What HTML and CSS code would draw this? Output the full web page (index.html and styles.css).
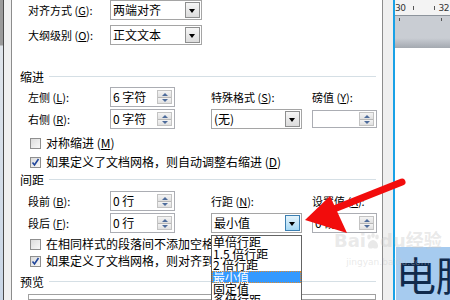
FILE: index.html
```html
<!DOCTYPE html>
<html lang="zh-CN">
<head>
    <meta charset="UTF-8">
    <title>段落</title>
    <link rel="stylesheet" href="styles.css">
</head>
<body>
<div class="screen">
    <div class="edge-left"></div>
    <div class="frame-left"></div>

    <div class="dialog">
        <div class="field-row first">
            <span class="label">对齐方式 (<u>G</u>):</span>
            <div class="select wide"><span class="value">两端对齐</span><span class="drop-btn"></span></div>
        </div>
        <div class="field-row">
            <span class="label">大纲级别 (<u>O</u>):</span>
            <div class="select wide"><span class="value">正文文本</span><span class="drop-btn"></span></div>
        </div>

        <div class="group-title indent-title"><span>缩进</span><i></i></div>
        <div class="field-grid">
            <span class="label">左侧 (<u>L</u>):</span>
            <div class="spin"><span class="value">6 字符</span><span class="spin-btns"><b class="up"></b><b class="down"></b></span></div>
            <span class="label col3">特殊格式 (<u>S</u>):</span>
            <span class="label col4">磅值 (<u>Y</u>):</span>

            <span class="label">右侧 (<u>R</u>):</span>
            <div class="spin"><span class="value">0 字符</span><span class="spin-btns"><b class="up"></b><b class="down"></b></span></div>
            <div class="select col3"><span class="value">(无)</span><span class="drop-btn"></span></div>
            <div class="spin col4 short"><span class="value"></span><span class="spin-btns"><b class="up"></b><b class="down"></b></span></div>
        </div>
        <div class="check-row cb-a"><span class="box"></span>对称缩进 (<u>M</u>)</div>
        <div class="check-row cb-b"><span class="box checked"></span>如果定义了文档网格，则自动调整右缩进 (<u>D</u>)</div>

        <div class="group-title spacing-title"><span>间距</span><i></i></div>
        <div class="field-grid">
            <span class="label">段前 (<u>B</u>):</span>
            <div class="spin"><span class="value">0 行</span><span class="spin-btns"><b class="up"></b><b class="down"></b></span></div>
            <span class="label col3">行距 (<u>N</u>):</span>
            <span class="label col4">设置值 (<u>A</u>):</span>

            <span class="label">段后 (<u>F</u>):</span>
            <div class="spin"><span class="value">0 行</span><span class="spin-btns"><b class="up"></b><b class="down"></b></span></div>
            <div class="select col3 open"><span class="value">最小值</span><span class="drop-btn hot"></span></div>
            <div class="spin col4"><span class="value">0 磅</span><span class="spin-btns"><b class="up"></b><b class="down"></b></span></div>
        </div>
        <div class="check-row cb-c"><span class="box"></span>在相同样式的段落间不添加空格 (<u>C</u>)</div>
        <div class="check-row cb-d"><span class="box checked"></span>如果定义了文档网格，则对齐到网格 (<u>W</u>)</div>

        <div class="group-title preview-title"><span>预览</span><i></i></div>
        <div class="preview"></div>
    </div>

    <div class="frame-right"></div>
    <div class="doc-border"></div>

    <div class="doc">
        <div class="ruler">
            <span class="num">30</span><span class="tick"></span><span class="tick"></span><span class="num">32</span>
        </div>
        <div class="ruler-marks"><span></span><span></span></div>
        <div class="doc-band"></div>
        <div class="doc-page"></div>
        <div class="doc-sel">电脑</div>
    </div>

    <ul class="drop-list">
        <li>单倍行距</li>
        <li>1.5 倍行距</li>
        <li>2 倍行距</li>
        <li class="current">最小值</li>
        <li>固定值</li>
        <li>多倍行距</li>
    </ul>

    <div class="watermark">
        <span class="wm-logo">Bai<svg width="14" height="16" viewBox="0 0 14 16"><ellipse cx="3" cy="4" rx="1.8" ry="2.4"/><ellipse cx="7" cy="2.5" rx="1.8" ry="2.4"/><ellipse cx="11" cy="4" rx="1.8" ry="2.4"/><path d="M7 7c-3 0-5.5 4-5 6.5s3 2.5 5 1.5c2 1 4.5 1 5-1.5S10 7 7 7z"/></svg>du经验</span>
        <span class="wm-url">jingyan.baidu.com</span>
    </div>

    <svg class="arrow" width="450" height="300" viewBox="0 0 450 300">
        <line x1="402" y1="182" x2="334" y2="209" stroke="#f20c0c" stroke-width="7" stroke-linecap="round"/>
        <polygon points="305,220 330,196 347,233" fill="#f20c0c"/>
    </svg>
</div>
</body>
</html>
```

FILE: styles.css
```css
body {
    margin: 0;
    padding: 0;
    background-color: #ffffff;
    font-family: "Noto Sans CJK SC", "DejaVu Sans", sans-serif;
    color: #000000;
}

.screen {
    position: relative;
    display: flex;
    width: 450px;
    height: 300px;
    overflow: hidden;
}

/* window frames on both sides of the dialog */
.edge-left {
    width: 3px;
    flex-shrink: 0;
    background: linear-gradient(#9a9a9a 0, #9a9a9a 45px, #dfe4ea 46px, #c9d6e6 100%);
}

.frame-left {
    width: 7px;
    flex-shrink: 0;
    background-color: #f0f0f0;
    border-left: 1px solid #4b4b4b;
    border-right: 1px solid #8c8c8c;
}

.frame-right {
    width: 10px;
    flex-shrink: 0;
    background-color: #efefef;
    border-left: 1px solid #8c8c8c;
}

.doc-border {
    width: 2px;
    flex-shrink: 0;
    background-color: #19a1e6;
}

.dialog {
    width: 370px;
    flex-shrink: 0;
    display: flex;
    flex-direction: column;
    background-color: #ffffff;
    padding-left: 8px;
    box-sizing: border-box;
}

.label {
    font-size: 11px;
    line-height: 20px;
    white-space: nowrap;
}

.label u, .check-row u {
    text-decoration: underline;
}

.field-row {
    display: flex;
    height: 20px;
    margin-top: 5px;
    padding-left: 8px;
}

.field-row.first {
    margin-top: 0;
}

.field-row .label {
    width: 82px;
}

.select {
    display: flex;
    align-items: center;
    height: 20px;
    border: 1px solid #a5a5a5;
    box-sizing: border-box;
    background-color: #fff;
}

.select.wide {
    width: 92px;
}

.select .value, .spin .value {
    flex: 1;
    font-size: 12px;
    line-height: 18px;
    padding-left: 2px;
    white-space: nowrap;
}

.drop-btn {
    position: relative;
    width: 15px;
    height: 16px;
    margin-right: 1px;
    border: 1px solid #8e8f8f;
    box-sizing: border-box;
    background: linear-gradient(#f6f6f6, #dcdcdc);
}

.drop-btn::after {
    content: "";
    position: absolute;
    left: 3px;
    top: 6px;
    border-left: 3.5px solid transparent;
    border-right: 3.5px solid transparent;
    border-top: 4px solid #000;
}

.drop-btn.hot {
    border-color: #3c7fb1;
    background: linear-gradient(#e5f4fc, #a7d9f5);
}

.group-title {
    display: flex;
    align-items: center;
    height: 18px;
    font-size: 12px;
    margin-right: 6px;
}

.group-title i {
    flex: 1;
    height: 1px;
    margin-left: 5px;
    background-color: #d5dfe5;
}

.indent-title { margin-top: 23px; }
.spacing-title { margin-top: 3px; }
.preview-title { margin-top: 6px; }

.field-grid {
    display: grid;
    grid-template-columns: 82px 65px 127px 75px;
    grid-template-rows: 20px 20px;
    row-gap: 2px;
    margin-top: 2px;
    padding-left: 8px;
}

.spacing-title + .field-grid {
    margin-top: 3px;
}

.field-grid .col3 {
    grid-column: 3;
    margin-left: 36px;
    width: 91px;
}

.field-grid .col4 {
    grid-column: 4;
    margin-left: 10px;
    width: 65px;
}

.spin {
    display: flex;
    align-items: center;
    height: 20px;
    width: 65px;
    border: 1px solid #abadb3;
    box-sizing: border-box;
    background-color: #fff;
}

.spin.short {
    height: 18px;
    margin-top: 1px;
}

.spin-btns {
    display: flex;
    flex-direction: column;
    width: 15px;
    height: 14px;
    margin-right: 2px;
    border: 1px solid #c3c3c3;
    box-sizing: border-box;
}

.spin-btns b {
    position: relative;
    flex: 1;
    background: linear-gradient(#f4f4f4, #e0e0e0);
}

.spin-btns b.down {
    border-top: 1px solid #b8b8b8;
}

.spin-btns b::after {
    content: "";
    position: absolute;
    left: 4px;
    top: 2px;
    border-left: 3px solid transparent;
    border-right: 3px solid transparent;
}

.spin-btns b.up::after {
    border-bottom: 3px solid #4e6c9b;
}

.spin-btns b.down::after {
    border-top: 3px solid #4e6c9b;
    top: 1px;
}

.check-row {
    display: flex;
    align-items: center;
    height: 12px;
    padding-left: 10px;
    font-size: 12px;
    line-height: 12px;
    white-space: nowrap;
}

.check-row .box {
    width: 11px;
    height: 11px;
    margin-right: 5px;
    border: 1px solid #8f8f8f;
    box-sizing: border-box;
    background: linear-gradient(135deg, #dcdcdc, #f8f8f8);
}

.check-row .box.checked {
    background:
        url("data:image/svg+xml;utf8,<svg xmlns='http://www.w3.org/2000/svg' width='9' height='9'><path d='M1.5 4.5l2 2.5 4-6' fill='none' stroke='%2321469b' stroke-width='1.6'/></svg>") center / 9px 9px no-repeat,
        linear-gradient(135deg, #dcdcdc, #f8f8f8);
}

.cb-a { margin-top: 8px; }
.cb-b { margin-top: 7px; }
.cb-c { margin-top: 5px; }
.cb-d { margin-top: 5px; }

.preview {
    margin-top: 4px;
    margin-left: 8px;
    margin-right: 6px;
    height: 20px;
    border: 1px solid #a0a0a0;
}

/* word document behind the dialog */
.doc {
    width: 55px;
    flex-shrink: 0;
    background-color: #ffffff;
}

.ruler {
    display: flex;
    align-items: center;
    height: 15px;
    background-color: #f3f3f3;
    border-bottom: 1px solid #8d949c;
    font-family: "DejaVu Sans", sans-serif;
    font-size: 9px;
    color: #333;
}

.ruler .num {
    letter-spacing: -0.5px;
}

.ruler .tick {
    width: 1px;
    height: 4px;
    background-color: #555;
    margin-left: 8px;
}

.ruler .tick + .tick {
    margin-left: 20px;
    margin-right: 3px;
}

.ruler-marks {
    display: flex;
    height: 6px;
    background-color: #c9cdd3;
    padding-left: 4px;
}

.ruler-marks span {
    flex-shrink: 0;
    width: 1px;
    height: 3px;
    margin-top: 2px;
    margin-right: 41px;
    background-color: #555;
}

.doc-band {
    height: 26px;
    background-color: #c9cdd3;
    background-image: linear-gradient(#c9cdd3 0, #c9cdd3 16px, #a4a9b0 26px);
}

.doc-page {
    height: 199px;
    background-color: #ffffff;
}

.doc-sel {
    height: 53px;
    background-color: #a6cbef;
    font-size: 40px;
    line-height: 40px;
    padding-top: 7px;
    box-sizing: border-box;
    color: #102a4c;
    white-space: nowrap;
    margin-left: 1px;
    overflow: hidden;
}

/* open dropdown of the line spacing select */
.drop-list {
    position: absolute;
    left: 211px;
    top: 235px;
    width: 91px;
    height: 80px;
    margin: 0;
    padding: 0;
    list-style: none;
    background-color: #fff;
    border: 1px solid #646464;
    box-sizing: border-box;
}

.drop-list li {
    height: 11.7px;
    font-size: 12px;
    line-height: 11.7px;
    padding-left: 1px;
    white-space: nowrap;
}

.drop-list li.current {
    background-color: #3399ff;
    color: #fff;
    outline: 1px dotted #e08a2c;
    outline-offset: -1px;
}

.watermark {
    position: absolute;
    left: 334px;
    top: 230px;
    display: flex;
    flex-direction: column;
    align-items: center;
    color: rgba(200, 200, 200, 0.4);
}

.wm-logo {
    display: flex;
    align-items: center;
    font-family: "DejaVu Sans", "Noto Sans CJK SC", sans-serif;
    font-weight: bold;
    font-size: 18px;
    line-height: 22px;
}

.wm-logo svg {
    fill: rgba(200, 200, 200, 0.4);
}

.wm-url {
    font-family: "DejaVu Sans", sans-serif;
    font-size: 9px;
    line-height: 12px;
    margin-top: 4px;
}

.arrow {
    position: absolute;
    left: 0;
    top: 0;
}
```
